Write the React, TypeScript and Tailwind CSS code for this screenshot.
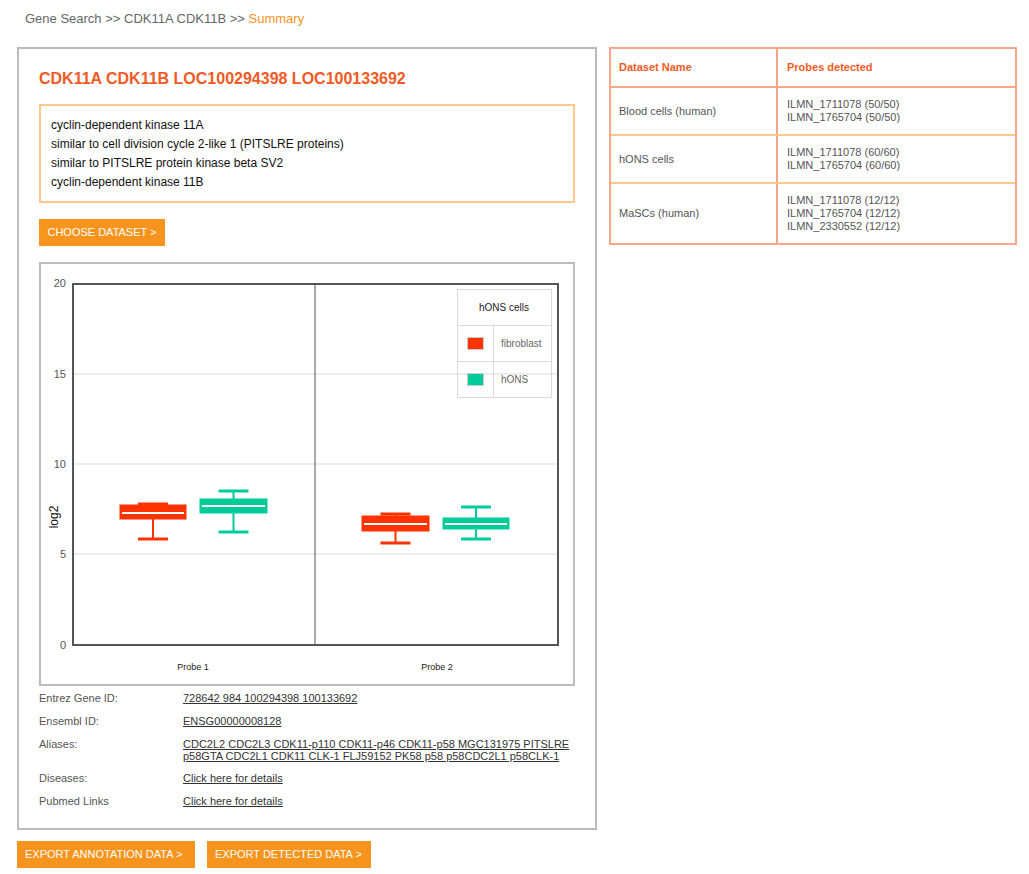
import React from 'react'

// ── Data ───────────────────────────────────────────────────────────────────────
const descriptions = [
  'cyclin-dependent kinase 11A',
  'similar to cell division cycle 2-like 1 (PITSLRE proteins)',
  'similar to PITSLRE protein kinase beta SV2',
  'cyclin-dependent kinase 11B',
]

const datasets = [
  { name: 'Blood cells (human)', probes: ['ILMN_1711078 (50/50)', 'ILMN_1765704 (50/50)'] },
  { name: 'hONS cells', probes: ['ILMN_1711078 (60/60)', 'ILMN_1765704 (60/60)'] },
  { name: 'MaSCs (human)', probes: ['ILMN_1711078 (12/12)', 'ILMN_1765704 (12/12)', 'ILMN_2330552 (12/12)'] },
]

const infoRows = [
  { label: 'Entrez Gene ID:', value: '728642 984 100294398 100133692' },
  { label: 'Ensembl ID:', value: 'ENSG00000008128' },
  {
    label: 'Aliases:',
    value:
      'CDC2L2 CDC2L3 CDK11-p110 CDK11-p46 CDK11-p58 MGC131975 PITSLRE p58GTA CDC2L1 CDK11 CLK-1 FLJ59152 PK58 p58 p58CDC2L1 p58CLK-1',
  },
  { label: 'Diseases:', value: 'Click here for details' },
  { label: 'Pubmed Links', value: 'Click here for details' },
]

// box coordinates in chart px (svg origin = inside of the chart frame)
const boxes = [
  { color: '#ff3300', x1: 79, x2: 145, top: 241, bottom: 255, median: 249, hi: 240, lo: 275 },
  { color: '#00cc99', x1: 159, x2: 226, top: 235, bottom: 249, median: 242, hi: 227, lo: 268 },
  { color: '#ff3300', x1: 321, x2: 388, top: 252, bottom: 267, median: 260, hi: 250, lo: 279 },
  { color: '#00cc99', x1: 402, x2: 468, top: 254, bottom: 265, median: 260, hi: 243, lo: 275 },
]

// ── Box plot ───────────────────────────────────────────────────────────────────
function BoxPlot() {
  const ticks = [
    { v: '20', y: 19 },
    { v: '15', y: 110 },
    { v: '10', y: 200 },
    { v: '5', y: 290 },
    { v: '0', y: 381 },
  ]
  return (
    <svg width="532" height="420" className="block" fontFamily="'Liberation Sans', Arial, sans-serif">
      {/* grid */}
      {ticks.slice(1, 4).map((t) => (
        <line key={t.v} x1="31" x2="517" y1={t.y} y2={t.y} stroke="#d9d9d9" strokeWidth="1" />
      ))}
      {ticks.map((t) => (
        <text key={t.v} x="25" y={t.y + 4} textAnchor="end" fontSize="11" fill="#555">
          {t.v}
        </text>
      ))}
      <line x1="274" x2="274" y1="19" y2="381" stroke="#555" strokeWidth="1" />
      <rect x="32" y="20" width="485" height="361" fill="none" stroke="#555" strokeWidth="2" />
      <text x="0" y="0" fontSize="12" fill="#111" textAnchor="middle" transform="translate(17 253) rotate(-90)">
        log2
      </text>

      {/* legend */}
      <g stroke="#d9d9d9" strokeWidth="1" fill="none">
        <rect x="416.5" y="25.5" width="94" height="108" />
        <line x1="416.5" x2="510.5" y1="61.5" y2="61.5" />
        <line x1="416.5" x2="510.5" y1="97.5" y2="97.5" />
        <line x1="452.5" x2="452.5" y1="61.5" y2="133.5" />
      </g>
      <text x="463" y="47" fontSize="10" fill="#222" textAnchor="middle">
        hONS cells
      </text>
      <rect x="426.5" y="73.5" width="16" height="12" fill="#ff3300" stroke="#ccc" />
      <rect x="426.5" y="109.5" width="16" height="12" fill="#00cc99" stroke="#ccc" />
      <text x="460" y="83" fontSize="10" fill="#666">
        fibroblast
      </text>
      <text x="460" y="119" fontSize="10" fill="#666">
        hONS
      </text>

      {/* boxes */}
      {boxes.map((b, i) => {
        const mid = (b.x1 + b.x2) / 2
        return (
          <g key={i} stroke={b.color}>
            <line x1={mid} x2={mid} y1={b.hi} y2={b.lo} strokeWidth="2" />
            <line x1={mid - 15} x2={mid + 15} y1={b.hi} y2={b.hi} strokeWidth="3" />
            <line x1={mid - 15} x2={mid + 15} y1={b.lo} y2={b.lo} strokeWidth="3" />
            <rect x={b.x1} y={b.top} width={b.x2 - b.x1} height={b.bottom - b.top} fill={b.color} strokeWidth="1" />
            <line x1={b.x1 + 2} x2={b.x2 - 2} y1={b.median} y2={b.median} stroke="#fff" strokeWidth="2" />
          </g>
        )
      })}

      <text x="152" y="406" fontSize="9" fill="#222" textAnchor="middle">
        Probe 1
      </text>
      <text x="396" y="406" fontSize="9" fill="#222" textAnchor="middle">
        Probe 2
      </text>
    </svg>
  )
}

export default function App() {
  return (
    <div className="min-h-screen bg-white font-['Liberation_Sans',Arial,sans-serif]">
      {/* ── Breadcrumb ── */}
      <div className="pl-[25px] pt-[11px] text-[13px] leading-[16px] text-[#666]">
        Gene Search &gt;&gt; CDK11A CDK11B &gt;&gt; <span className="text-[#f7941d]">Summary</span>
      </div>

      <div className="flex items-start gap-[12px] pl-[17px] pt-[20px]">
        {/* ── Left column ── */}
        <div className="w-[580px]">
          <div className="border-2 border-[#bbbbbb] px-[20px] pt-[20px] pb-[16px]">
            <h1 className="text-[16px] leading-[20px] font-bold text-[#f15a24]">
              CDK11A CDK11B LOC100294398 LOC100133692
            </h1>

            <div className="mt-[15px] border-2 border-[#fdc98b] px-[10px] pt-[10px] pb-[9px] text-[12px] leading-[19px] text-[#111]">
              {descriptions.map((d) => (
                <p key={d}>{d}</p>
              ))}
            </div>

            <button className="mt-[16px] h-[27px] w-[126px] bg-[#f7941d] text-[11px] text-white">
              CHOOSE DATASET &gt;
            </button>

            <div className="mt-[16px] border-2 border-[#bbbbbb]">
              <BoxPlot />
            </div>

            <div className="text-[11px] leading-[12px] text-[#555]">
              {infoRows.map(({ label, value }) => (
                <div
                  key={label}
                  className={`flex pt-[5.5px] ${label === 'Aliases:' ? 'pb-[4.5px]' : 'pb-[5.5px]'}`}
                >
                  <div className="w-[144px] shrink-0">{label}</div>
                  <a className="flex-1 text-[#333] underline">{value}</a>
                </div>
              ))}
            </div>
          </div>

          <div className="mt-[11px] flex gap-[12px]">
            <button className="h-[27px] w-[178px] bg-[#f7941d] px-[8px] text-left text-[11px] text-white">
              EXPORT ANNOTATION DATA &gt;
            </button>
            <button className="h-[27px] w-[164px] bg-[#f7941d] px-[8px] text-left text-[11px] text-white">
              EXPORT DETECTED DATA &gt;
            </button>
          </div>
        </div>

        {/* ── Right column: dataset table ── */}
        <div className="w-[408px] border-2 border-[#f7a68c] text-[11px] leading-[13px]">
          <div className="flex">
            <div className="w-[167px] shrink-0 border-r-2 border-[#f7a68c] px-[8px] py-[12px] font-bold text-[#f15a24]">
              Dataset Name
            </div>
            <div className="flex-1 px-[9px] py-[12px] font-bold text-[#f15a24]">Probes detected</div>
          </div>
          {datasets.map((d, i) => (
            <div
              key={d.name}
              className={`flex border-t-2 ${i === 0 ? 'border-[#f7a68c]' : 'border-[#fdc98b]'}`}
            >
              <div className="flex w-[167px] shrink-0 items-center border-r-2 border-[#f7a68c] px-[8px] text-[#555]">
                {d.name}
              </div>
              <div className="flex-1 px-[9px] py-[10px] text-[#555]">
                {d.probes.map((p) => (
                  <div key={p}>{p}</div>
                ))}
              </div>
            </div>
          ))}
        </div>
      </div>
    </div>
  )
}
